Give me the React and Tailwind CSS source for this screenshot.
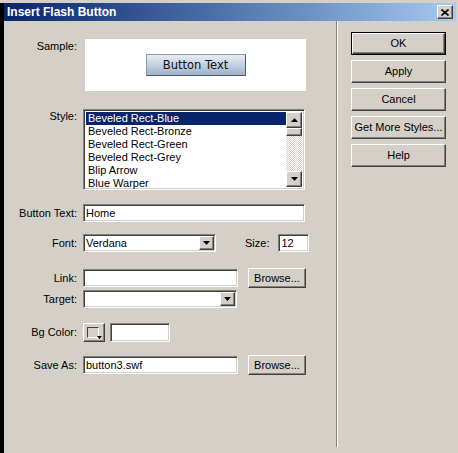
import React from 'react';

// classic win2k bevels
const sunken = 'border border-t-[#808080] border-l-[#808080] border-b-white border-r-white shadow-[inset_1px_1px_0_#404040,inset_-1px_-1px_0_#d4d0c8]';
const raised = 'border border-t-white border-l-white border-b-[#404040] border-r-[#404040] shadow-[inset_-1px_-1px_0_#808080]';

function Arrow({ up }) {
    return (
        <svg width="7" height="4" viewBox="0 0 7 4">
            <path d={up ? 'M3.5 0L7 4H0z' : 'M0 0h7L3.5 4z'} fill="black" />
        </svg>
    );
}

function DropBtn() {
    return (
        <div className={`w-[15px] h-full bg-[#d4d0c8] flex items-center justify-center ${raised}`}>
            <Arrow />
        </div>
    );
}

function Label({ children, top }) {
    return (
        <div className={`w-[73px] shrink-0 text-right ${top ? 'pt-[1px]' : ''}`}>{children}</div>
    );
}

function Button({ children, className = '' }) {
    return (
        <div className={`bg-[#d4d0c8] flex items-center justify-center ${raised} ${className}`}>{children}</div>
    );
}

const styles = ['Beveled Rect-Blue', 'Beveled Rect-Bronze', 'Beveled Rect-Green', 'Beveled Rect-Grey', 'Blip Arrow', 'Blue Warper'];

export default function App() {
    return (
        <div className="w-[458px] h-[453px] bg-[#d4d0c8] flex overflow-hidden text-[11px] leading-[13px] text-black font-['Liberation_Sans',Arial,sans-serif]">
            <div className="w-[4px] bg-black mt-[3px]" />
            <div className="flex-1 flex flex-col pt-[3px] pr-[2px]">
                {/* Title bar */}
                <div className="h-[18px] flex items-center justify-between pl-[3px] pr-[3px] bg-linear-to-r from-[#0a246a] to-[#a6caf0]">
                    <span className="text-white font-bold text-[12px]">Insert Flash Button</span>
                    <div className={`w-[16px] h-[14px] bg-[#d4d0c8] flex items-center justify-center ${raised}`}>
                        <svg width="8" height="7" viewBox="0 0 8 7">
                            <path d="M0.5 0.5L7.5 6.5M7.5 0.5L0.5 6.5" stroke="black" strokeWidth="1.6" />
                        </svg>
                    </div>
                </div>

                <div className="flex flex-1">
                    {/* Left form */}
                    <div className="w-[332px] flex flex-col">
                        <div className="flex items-start gap-[6px] mt-[18px]">
                            <Label top>Sample:</Label>
                            <div className="ml-[2px] w-[221px] h-[52px] bg-white flex items-center justify-center">
                                <div className="w-[100px] h-[22px] flex items-center justify-center border border-[#4a5a72] border-t-[#8c9ab0] border-l-[#8c9ab0] bg-linear-to-b from-[#e8eef6] to-[#9fb1c9] text-[#111] text-[11.5px] font-['DejaVu_Sans',sans-serif]">
                                    Button Text
                                </div>
                            </div>
                        </div>

                        <div className="flex items-start gap-[6px] mt-[18px]">
                            <Label top>Style:</Label>
                            <div className={`w-[222px] h-[81px] bg-white flex p-[2px] ${sunken}`}>
                                <div className="flex-1 flex flex-col">
                                    {styles.map((s, i) => (
                                        <div key={s} className={`h-[13px] pl-[2px] leading-[13px] ${i === 0 ? 'bg-[#0a246a] text-white' : ''}`}>{s}</div>
                                    ))}
                                </div>
                                <div className="w-[16px] flex flex-col">
                                    <Button className="h-[16px]"><Arrow up /></Button>
                                    <Button className="h-[8px]" />
                                    <div className="flex-1 bg-[image:repeating-conic-gradient(#d4d0c8_0_25%,#ffffff_0_50%)] bg-[length:2px_2px]" />
                                    <Button className="h-[16px]"><Arrow /></Button>
                                </div>
                            </div>
                        </div>

                        <div className="flex items-center gap-[6px] mt-[14px]">
                            <Label>Button Text:</Label>
                            <div className={`w-[222px] h-[18px] bg-white pl-[2px] flex items-center ${sunken}`}>Home</div>
                        </div>

                        <div className="flex items-center gap-[6px] mt-[12px]">
                            <Label>Font:</Label>
                            <div className={`w-[133px] h-[18px] bg-white flex items-center p-[1px] ${sunken}`}>
                                <span className="flex-1 pl-[1px]">Verdana</span>
                                <DropBtn />
                            </div>
                            <span className="ml-[23px]">Size:</span>
                            <div className={`ml-[3px] w-[31px] h-[18px] bg-white pl-[2px] flex items-center ${sunken}`}>12</div>
                        </div>

                        <div className="flex items-center gap-[6px] mt-[16px] h-[20px]">
                            <Label>Link:</Label>
                            <div className={`w-[155px] h-[18px] bg-white ${sunken}`} />
                            <Button className="ml-[4px] w-[58px] h-[20px]">Browse...</Button>
                        </div>

                        <div className="flex items-center gap-[6px] mt-[2px]">
                            <Label>Target:</Label>
                            <div className={`w-[154px] h-[18px] bg-white flex items-center justify-end p-[1px] ${sunken}`}>
                                <DropBtn />
                            </div>
                        </div>

                        <div className="flex items-center gap-[6px] mt-[15px]">
                            <Label>Bg Color:</Label>
                            <div className={`relative w-[22px] h-[19px] bg-[#d4d0c8] p-[3px] ${raised}`}>
                                <div className="w-[12px] h-[11px] border border-t-[#404040] border-l-[#404040] border-b-white border-r-white" />
                                <div className="absolute right-[2px] bottom-[2px]">
                                    <svg width="5" height="3" viewBox="0 0 5 3"><path d="M0 0h5L2.5 3z" fill="black" /></svg>
                                </div>
                            </div>
                            <div className={`-ml-[1px] w-[60px] h-[19px] bg-white ${sunken}`} />
                        </div>

                        <div className="flex items-center gap-[6px] mt-[13px] h-[20px]">
                            <Label>Save As:</Label>
                            <div className={`w-[155px] h-[18px] bg-white pl-[2px] flex items-center ${sunken}`}>button3.swf</div>
                            <Button className="ml-[4px] w-[58px] h-[20px]">Browse...</Button>
                        </div>
                    </div>

                    {/* Separator */}
                    <div className="w-[2px] h-[426px] border-l border-l-[#808080] border-r border-r-white" />

                    {/* Right buttons */}
                    <div className="flex flex-col gap-[5px] pl-[13px] pt-[11px]">
                        <div className="w-[95px] h-[23px] border border-black flex">
                            <Button className="flex-1">OK</Button>
                        </div>
                        <Button className="w-[95px] h-[23px]">Apply</Button>
                        <Button className="w-[95px] h-[23px]">Cancel</Button>
                        <Button className="w-[95px] h-[23px]">Get More Styles...</Button>
                        <Button className="w-[95px] h-[23px]">Help</Button>
                    </div>
                </div>
            </div>
        </div>
    );
}
